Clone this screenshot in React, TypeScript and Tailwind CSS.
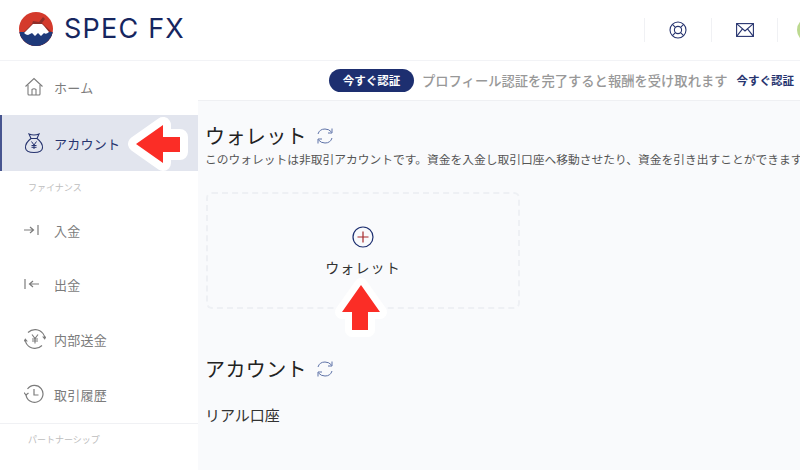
import type { ReactNode } from "react";

const jp = "font-['Noto_Sans_CJK_JP','Noto_Sans',sans-serif]";

function Logo() {
  return (
    <svg width="34" height="34" viewBox="0 0 34 34">
      <defs>
        <clipPath id="logo-c">
          <circle cx="17" cy="17" r="17" />
        </clipPath>
      </defs>
      <g clipPath="url(#logo-c)">
        <rect width="34" height="34" fill="#d43a2c" />
        <path d="M0 24 L7 18 L13 12 L14 9 L20 10 L24 5 L26 7 L23 11 L25 13 L34 21 V34 H0 Z" fill="#8f2f2a" />
        <rect y="20" width="34" height="14" fill="#1f3a7a" />
        <path d="M5 21 L12 14 L14 12 L23 12 L25 14 L30 20 Q27 23 25 21 L22 24 L19 21 L16 24 L13 21 L9 23 Q7 23 5 21 Z" fill="#fff" />
      </g>
    </svg>
  );
}

function HomeIcon() {
  return (
    <svg width="20" height="20" viewBox="0 0 20 20" fill="none" stroke="#7c7c7c" strokeWidth="1.1">
      <path d="M1.5 9.5 L10 1.5 L18.5 9.5" />
      <path d="M4 8 V17 Q4 18 5 18 H15 Q16 18 16 17 V8" />
      <path d="M8 18 V12.5 Q10 11 12 12.5 V18" />
    </svg>
  );
}

function MoneyBag() {
  return (
    <svg width="20" height="22" viewBox="0 0 20 22" fill="none" stroke="#27346f" strokeWidth="1.1">
      <path d="M5 2 Q10 4 15 2 L13 6.5 H7 Z" />
      <path d="M7 6.5 Q1 11 1.5 16 Q2 20.5 10 20.5 Q18 20.5 18.5 16 Q19 11 13 6.5" />
      <path d="M7.5 9.5 L10 13 L12.5 9.5 M10 13 V17 M7.5 13.5 H12.5 M7.5 15.3 H12.5" strokeWidth="1" />
    </svg>
  );
}

function ArrowIn() {
  return (
    <svg width="16" height="12" viewBox="0 0 16 12" fill="none" stroke="#7c7c7c" strokeWidth="1.2">
      <path d="M0 6 H9 M6 3 L9.5 6 L6 9" />
      <path d="M14 1 V11" />
    </svg>
  );
}

function ArrowOut() {
  return (
    <svg width="16" height="12" viewBox="0 0 16 12" fill="none" stroke="#7c7c7c" strokeWidth="1.2">
      <path d="M1 1 V11" />
      <path d="M15 6 H6 M9 3 L5.5 6 L9 9" />
    </svg>
  );
}

function TransferIcon() {
  return (
    <svg width="22" height="22" viewBox="0 0 22 22" fill="none" stroke="#7c7c7c" strokeWidth="1.1">
      <path d="M4 4.5 A10 10 0 0 1 19 5.5 Q20.5 7.5 20.7 10" />
      <path d="M18 17.5 A10 10 0 0 1 3 16.5 Q1.5 14.5 1.3 12" />
      <path d="M18.7 8.5 L20.7 10.8 L22 8.5 M3.3 13.5 L1.3 11.2 L0 13.5" />
      <path d="M8 6.5 L11 10.5 L14 6.5 M11 10.5 V15.5 M8 11 H14 M8 13 H14" />
    </svg>
  );
}

function HistoryIcon() {
  return (
    <svg width="20" height="20" viewBox="0 0 20 20" fill="none" stroke="#7c7c7c" strokeWidth="1.2">
      <path d="M3.5 5 A8.5 8.5 0 1 1 2 10.5" />
      <path d="M0 8.5 L2 11 L4.5 9" />
      <path d="M10 5 V11 H14.5" />
    </svg>
  );
}

function Refresh() {
  return (
    <svg width="18" height="18" viewBox="0 0 18 18" fill="none" stroke="#5f73a8" strokeWidth="1">
      <path d="M2 7 Q3.5 2 9 2 Q13 2 15.5 5" />
      <path d="M16 1.5 V6 H12" />
      <path d="M16 11 Q14.5 16 9 16 Q5 16 2.5 13" />
      <path d="M2 16.5 V12 H6" />
    </svg>
  );
}

function NavItem({
  icon,
  label,
  active,
  className,
}: {
  icon: ReactNode;
  label: string;
  active?: boolean;
  className: string;
}) {
  return (
    <div
      className={`flex items-center ${className} ${
        active
          ? "border-l-2 border-[#47558f] bg-[#e2e5ee] pl-[22px] text-[#27346f]"
          : "pl-6 text-[#7c7c7c]"
      }`}
    >
      <span className="flex w-[30px] shrink-0 items-center">{icon}</span>
      <span className="text-[13px] leading-none tracking-[0.02em]">{label}</span>
    </div>
  );
}

function SectionLabel({ children, className }: { children: string; className: string }) {
  return <div className={`pl-7 text-[9px] leading-none text-[#bdbdbd] ${className}`}>{children}</div>;
}

export default function App() {
  return (
    <div className={`relative flex h-[470px] w-[800px] flex-col overflow-hidden bg-white ${jp}`}>
      {/* ヘッダー */}
      <header className="flex h-[61px] shrink-0 items-center border-b border-[#f2f3f6] pl-[19px]">
        <div className="mb-[3px] flex items-center">
          <Logo />
          <span className="ml-[11px] font-['Inter',sans-serif] text-[27px] font-normal leading-none tracking-[0.045em] text-[#16265f]">
            SPEC FX
          </span>
        </div>
        <div className="ml-auto mr-[-24px] flex h-[24px] items-center">
          <div className="flex h-full w-[68px] items-center justify-center border-x border-[#f0f1f4]">
            <svg width="18" height="18" viewBox="0 0 18 18" fill="none" stroke="#27346f" strokeWidth="1.1">
              <circle cx="9" cy="9" r="8" />
              <circle cx="9" cy="9" r="3.6" />
              <path d="M3.4 3.4 L6.4 6.4 M14.6 3.4 L11.6 6.4 M3.4 14.6 L6.4 11.6 M14.6 14.6 L11.6 11.6" />
            </svg>
          </div>
          <div className="flex h-full w-[66px] items-center justify-center border-r border-[#f0f1f4]">
            <svg width="18" height="14" viewBox="0 0 18 14" fill="none" stroke="#27346f" strokeWidth="1.1">
              <rect x="0.6" y="0.6" width="16.8" height="12.8" />
              <path d="M0.6 0.6 L9 8 L17.4 0.6 M0.6 13.4 L6.5 5.8 M17.4 13.4 L11.5 5.8" />
            </svg>
          </div>
          <div className="ml-[19px] h-[26px] w-[27px] rounded-full bg-[#bcd98f]" />
        </div>
      </header>

      <div className="flex min-h-0 flex-1">
        {/* サイドバー */}
        <aside className="w-[198px] shrink-0 bg-white">
          <NavItem icon={<HomeIcon />} label="ホーム" className="mt-[4px] h-[44px]" />
          <NavItem icon={<MoneyBag />} label="アカウント" active className="mt-[6px] h-[56px]" />
          <SectionLabel className="mt-[12px]">ファイナンス</SectionLabel>
          <NavItem icon={<ArrowIn />} label="入金" className="mt-[16px] h-[44px]" />
          <NavItem icon={<ArrowOut />} label="出金" className="mt-[10px] h-[44px]" />
          <NavItem icon={<TransferIcon />} label="内部送金" className="mt-[11px] h-[44px]" />
          <NavItem icon={<HistoryIcon />} label="取引履歴" className="mt-[11px] h-[44px]" />
          <div className="mt-[7px] border-t border-[#f0f1f4]" />
          <SectionLabel className="mt-[11px]">パートナーシップ</SectionLabel>
        </aside>

        {/* メイン */}
        <main className="min-w-0 flex-1 bg-[#f9fafc]">
          <div className="flex h-[40px] items-center border-b border-[#eff0f3] bg-white pl-[131px] whitespace-nowrap">
            <span className="flex h-[23px] w-[85px] items-center justify-center rounded-full bg-[#1d2f70] text-[11.5px] font-bold text-white">
              今すぐ認証
            </span>
            <span className="ml-[8px] text-[13.3px] font-medium text-[#989898]">
              プロフィール認証を完了すると報酬を受け取れます
            </span>
            <span className="ml-[9px] text-[11.5px] font-bold text-[#27346f]">今すぐ認証</span>
          </div>

          <div className="pl-[7px] pt-[21px]">
            <div className="flex h-[28px] items-center">
              <h2 className="text-[20px] font-normal leading-none tracking-[0.02em] text-[#222]">ウォレット</h2>
              <span className="ml-[9px] flex">
                <Refresh />
              </span>
            </div>
            <p className="mt-[1px] whitespace-nowrap text-[11.75px] leading-[16px] text-[#555]">
              このウォレットは非取引アカウントです。資金を入金し取引口座へ移動させたり、資金を引き出すことができます。
            </p>

            <div className="ml-[1px] mt-[25px] flex h-[117px] w-[314px] flex-col items-center rounded-[6px] border-2 border-dashed border-[#eef0f4] pt-[32px]">
              <svg width="22" height="22" viewBox="0 0 22 22" fill="none">
                <circle cx="11" cy="11" r="10" stroke="#1d2f70" strokeWidth="1.2" />
                <path d="M11 5.5 V16.5 M5.5 11 H16.5" stroke="#a5282a" strokeWidth="1.2" />
              </svg>
              <span className="mt-[10px] text-[14px] leading-[18px] tracking-[0.08em] text-[#333]">ウォレット</span>
            </div>

            <div className="mt-[46px] flex h-[28px] items-center">
              <h2 className="text-[20px] font-normal leading-none tracking-[0.02em] text-[#222]">アカウント</h2>
              <span className="ml-[9px] flex">
                <Refresh />
              </span>
            </div>
            <p className="mt-[22px] text-[15px] leading-[20px] text-[#333]">リアル口座</p>
          </div>
        </main>
      </div>

      {/* 赤い矢印 */}
      <svg width="64" height="64" viewBox="0 0 64 64" className="absolute left-[128px] top-[112px]">
        <path
          d="M8 32 L35 13 V25 H52 V40 H35 V51 Z"
          fill="#fb2d26"
          stroke="#fff"
          strokeWidth="16"
          strokeLinejoin="round"
          paintOrder="stroke"
        />
      </svg>
      <svg width="64" height="64" viewBox="0 0 64 64" className="absolute left-[329px] top-[276px]">
        <path
          d="M32 9 L51 36 H39 V54 H23 V36 H13 Z"
          fill="#fb2d26"
          stroke="#fff"
          strokeWidth="14"
          strokeLinejoin="round"
          paintOrder="stroke"
        />
      </svg>
    </div>
  );
}
